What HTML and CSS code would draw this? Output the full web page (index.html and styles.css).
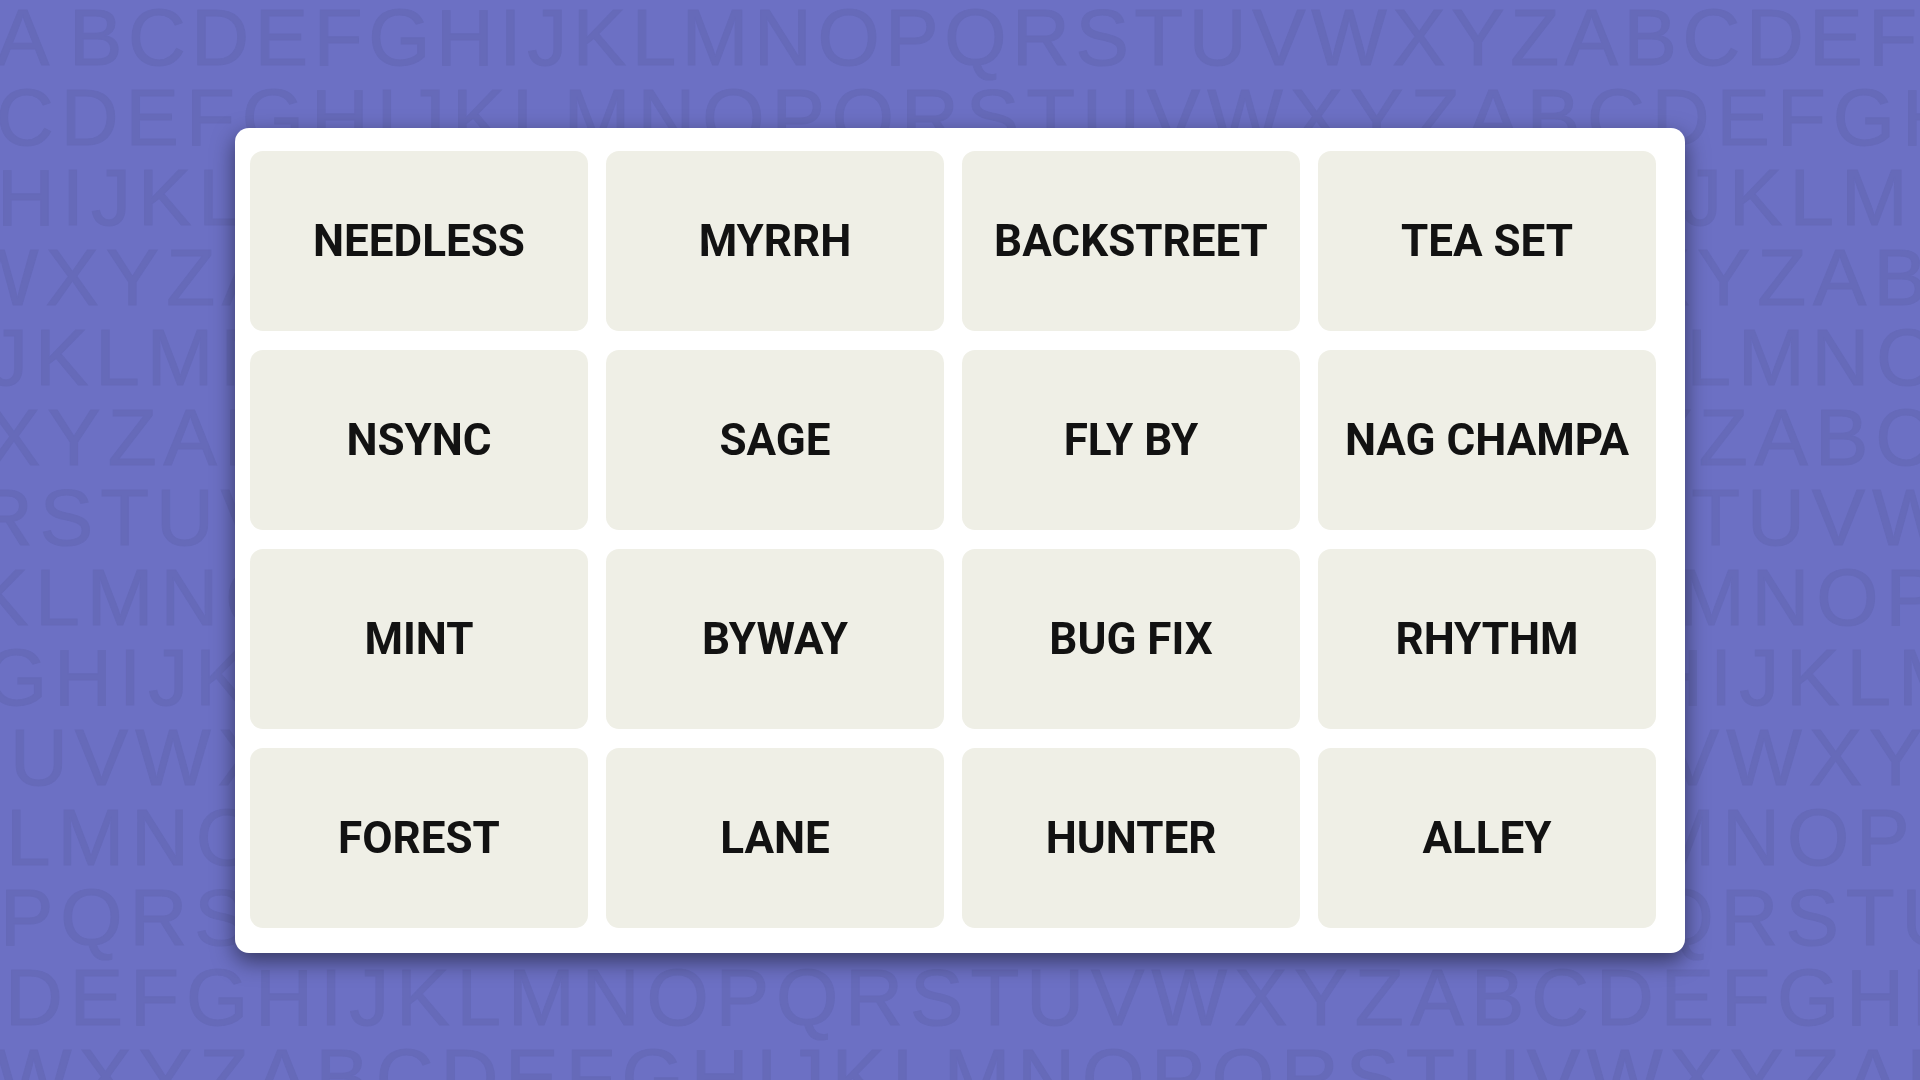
FILE: index.html
```html
<!DOCTYPE html>
<html lang="en">
<head>
  <meta charset="UTF-8">
  <meta name="viewport" content="width=device-width, initial-scale=1.0">
  <title>Word Groups</title>
  <link rel="stylesheet" href="styles.css">
</head>
<body>
  <!-- alphabet wallpaper -->
  <svg class="letters" aria-hidden="true">
    <text class="first-row" y="65"><tspan x="-4">A</tspan><tspan x="69">BCDEFGHIJKLMNOPQRSTUVWXYZABCDEF</tspan></text>
    <text x="-4" y="145">CDEFGHIJKLMNOPQRSTUVWXYZABCDEFGH</text>
    <text x="-3" y="225">HIJKLMNOPQRSTUVWXYZABCDEFGHIJKLM</text>
    <text x="-37" y="305">WXYZABCDEFGHIJKLMNOPQRSTUVWXYZAB</text>
    <text x="-12" y="385">JKLMNOPQRSTUVWXYZABCDEFGHIJKLMNO</text>
    <text x="-13" y="465">XYZABCDEFGHIJKLMNOPQRSTUVWXYZABC</text>
    <text x="-25" y="545">RSTUVWXYZABCDEFGHIJKLMNOPQRSTUVW</text>
    <text x="-25" y="625">KLMNOPQRSTUVWXYZABCDEFGHIJKLMNOP</text>
    <text x="-15" y="705">GHIJKLMNOPQRSTUVWXYZABCDEFGHIJKLM</text>
    <text x="10" y="785">UVWXYZABCDEFGHIJKLMNOPQRSTUVWXY</text>
    <text x="6" y="865">LMNOPQRSTUVWXYZABCDEFGHIJKLMNOP</text>
    <text x="0" y="945">PQRSTUVWXYZABCDEFGHIJKLMNOPQRSTU</text>
    <text x="5" y="1025">DEFGHIJKLMNOPQRSTUVWXYZABCDEFGHI</text>
    <text x="-4" y="1105">WXYZABCDEFGHIJKLMNOPQRSTUVWXYZAB</text>
  </svg>

  <main class="board">
    <button type="button" class="tile">NEEDLESS</button>
    <button type="button" class="tile">MYRRH</button>
    <button type="button" class="tile">BACKSTREET</button>
    <button type="button" class="tile">TEA SET</button>
    <button type="button" class="tile">NSYNC</button>
    <button type="button" class="tile">SAGE</button>
    <button type="button" class="tile">FLY BY</button>
    <button type="button" class="tile">NAG CHAMPA</button>
    <button type="button" class="tile">MINT</button>
    <button type="button" class="tile">BYWAY</button>
    <button type="button" class="tile">BUG FIX</button>
    <button type="button" class="tile">RHYTHM</button>
    <button type="button" class="tile">FOREST</button>
    <button type="button" class="tile">LANE</button>
    <button type="button" class="tile">HUNTER</button>
    <button type="button" class="tile">ALLEY</button>
  </main>
</body>
</html>
```
FILE: styles.css
```css
* {
  box-sizing: border-box;
}
body {
  margin: 0;
  min-height: 100vh;
  padding: 0 235px;
  display: flex;
  align-items: center;
  justify-content: center;
  background: #6c70c4;
  overflow: hidden;
}
.letters {
  position: fixed;
  top: 0;
  left: 0;
  width: 100%;
  height: 100%;
  fill: #666ab9;
  stroke: #666ab9;
  stroke-width: 1px;
  font-family: "Liberation Sans", Arial, sans-serif;
  font-size: 80px;
  letter-spacing: 7px;
  font-kerning: none;
  pointer-events: none;
}
.first-row {
  letter-spacing: 0.07em;
}
.board {
  position: relative;
  flex: 1;
  display: grid;
  grid-template-columns: repeat(4, 1fr);
  gap: 19px 18px;
  padding: 23px 29px 25px 15px;
  background: #fff;
  border-radius: 14px;
  box-shadow: 0 8px 22px rgba(0, 0, 0, 0.5);
}
.tile {
  min-width: 0;
  min-height: 180px;
  padding: 0;
  border: none;
  border-radius: 13px;
  background: #efefe6;
  color: #121212;
  font-family: "Roboto", Arial, sans-serif;
  font-size: 44px;
  font-weight: 700;
  line-height: 52px;
  cursor: pointer;
}
.tile:hover {
  background: #e6e6da;
}
```
